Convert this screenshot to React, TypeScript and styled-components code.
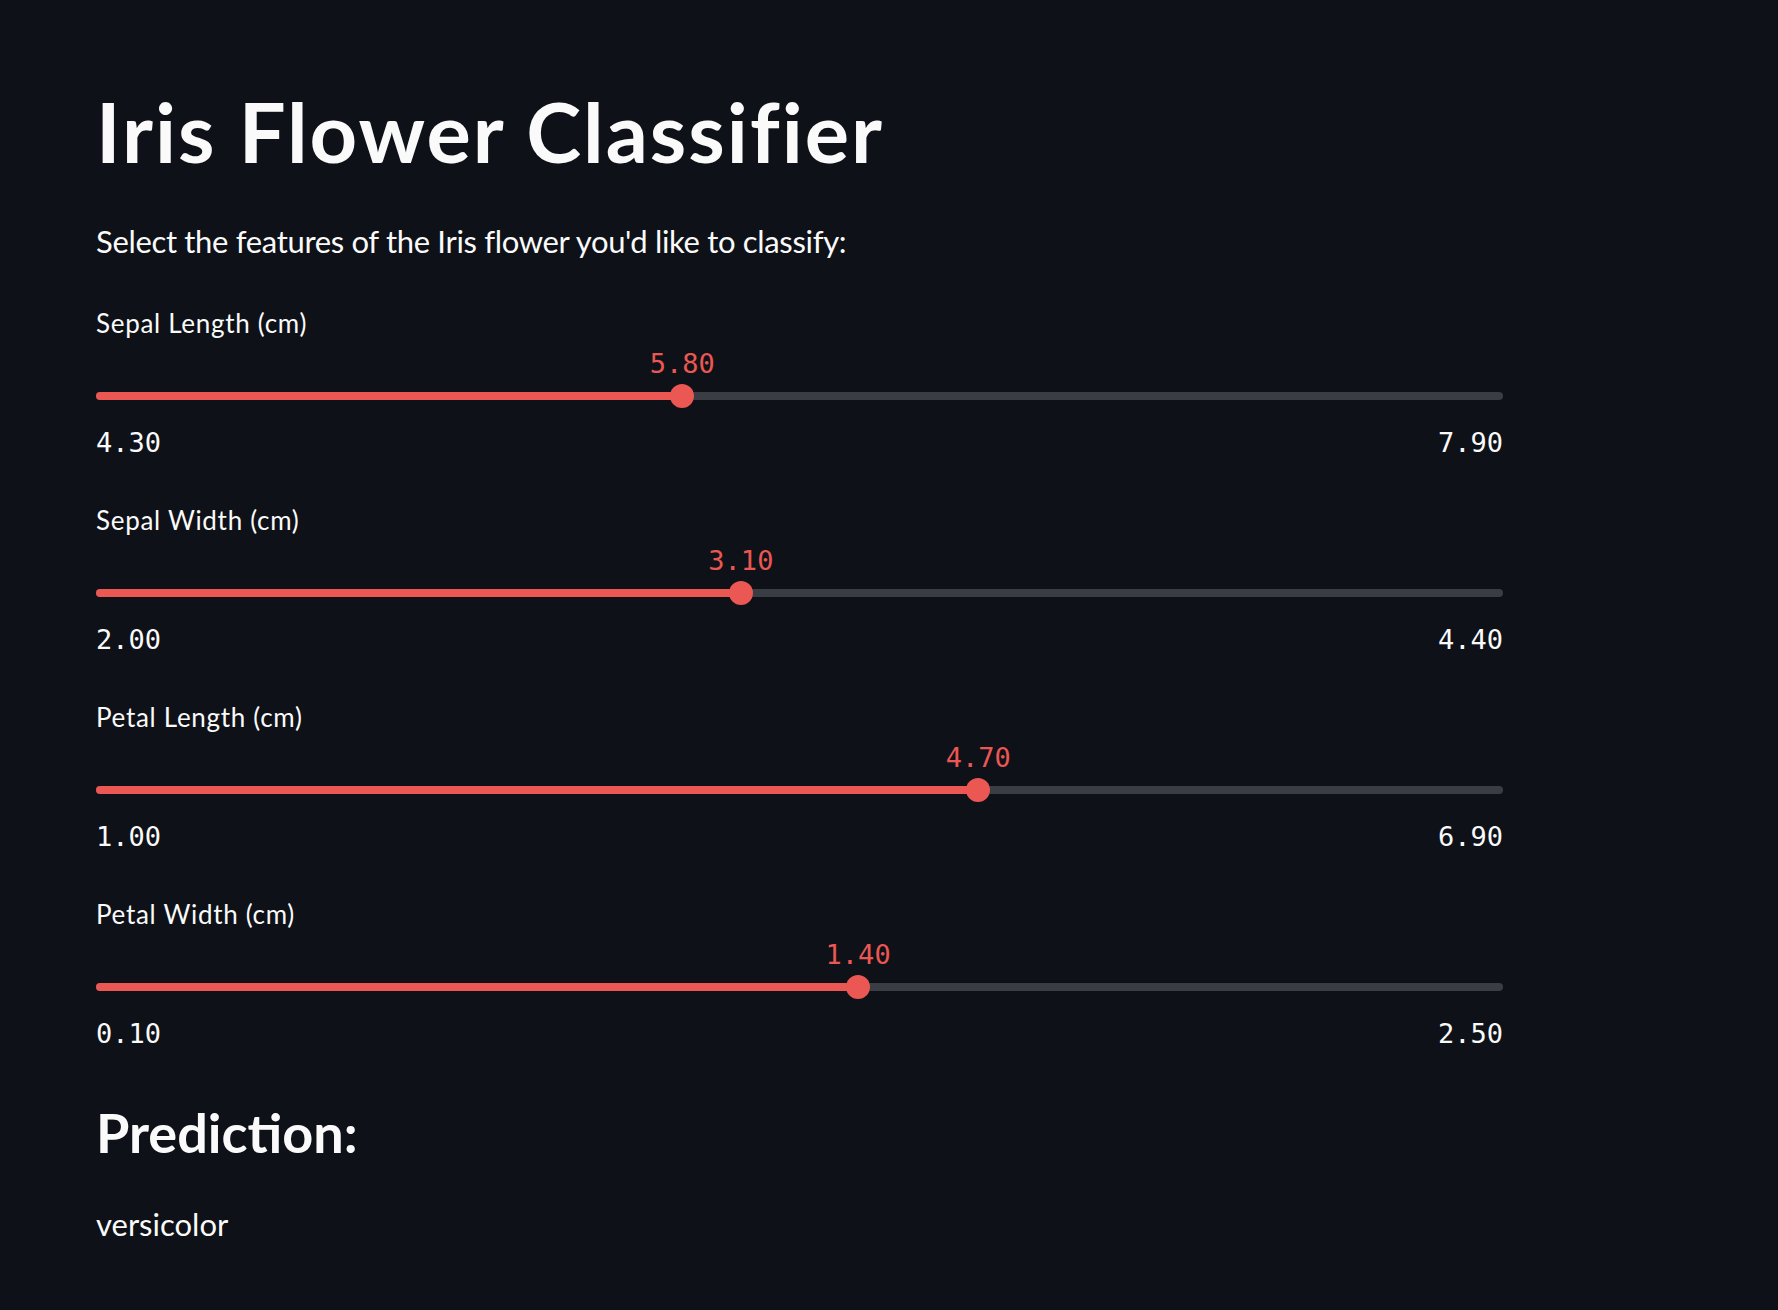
import React from "react";
import styled, { createGlobalStyle } from "styled-components";

const GlobalStyle = createGlobalStyle`
  html, body {
    margin: 0;
    padding: 0;
    background: #0e1117;
  }
  body {
    font-family: "Source Sans Pro", Lato, "Noto Sans", sans-serif;
    color: #fafafa;
    -webkit-font-smoothing: antialiased;
  }
`;

const RED = "#eb5753";
const RAIL = "#3b3d45";

const Page = styled.main`
  min-height: 1310px;
  box-sizing: border-box;
  padding: 83px 0 0 96px;
  background: #0e1117;
`;

const Column = styled.div`
  width: 1407px;
  display: flex;
  flex-direction: column;
`;

const Title = styled.h1`
  margin: 0;
  font-size: 83px;
  line-height: 96px;
  font-weight: 700;
  letter-spacing: 2px;
  color: #fafafa;
`;

const Intro = styled.p`
  margin: 42px 0 0;
  font-size: 31px;
  line-height: 40px;
  letter-spacing: -0.33px;
`;

const SliderList = styled.div`
  margin-top: 46px;
  display: flex;
  flex-direction: column;
  gap: 45px;
`;

const SliderBlock = styled.div`
  display: flex;
  flex-direction: column;
`;

const Label = styled.label`
  font-size: 26px;
  line-height: 32px;
  letter-spacing: 0.7px;
  color: #fafafa;
`;

const ValueRow = styled.div`
  position: relative;
  margin-top: 9px;
  height: 32px;
`;

const Mono = styled.span`
  font-family: "DejaVu Sans Mono", "Liberation Mono", monospace;
  font-size: 27px;
  line-height: 32px;
`;

const ValueText = styled(Mono)`
  position: absolute;
  top: 0;
  transform: translateX(-50%);
  color: ${RED};
  white-space: nowrap;
`;

const TrackRow = styled.div`
  margin-top: 4px;
  height: 24px;
  display: flex;
  align-items: center;
`;

const Rail = styled.div`
  position: relative;
  width: 100%;
  height: 8px;
  border-radius: 4px;
  background: ${RAIL};
`;

const Fill = styled.div`
  height: 100%;
  border-radius: 4px 0 0 4px;
  background: ${RED};
`;

const Thumb = styled.div`
  position: absolute;
  top: 50%;
  width: 24px;
  height: 24px;
  border-radius: 50%;
  background: ${RED};
  transform: translate(-50%, -50%);
`;

const RangeRow = styled.div`
  margin-top: 19px;
  display: flex;
  justify-content: space-between;
`;

const RangeText = styled(Mono)`
  color: #fafafa;
`;

const Heading = styled.h3`
  margin: 51px 0 0;
  font-size: 54px;
  line-height: 64px;
  font-weight: 700;
`;

const Result = styled.p`
  margin: 39px 0 0;
  font-size: 31px;
  line-height: 40px;
`;

type SliderProps = { label: string; min: number; max: number; value: number };

const Slider: React.FC<SliderProps> = ({ label, min, max, value }) => {
  const pct = ((value - min) / (max - min)) * 100;
  return (
    <SliderBlock>
      <Label>{label}</Label>
      <ValueRow>
        <ValueText style={{ left: `${pct}%` }}>{value.toFixed(2)}</ValueText>
      </ValueRow>
      <TrackRow>
        <Rail>
          <Fill style={{ width: `${pct}%` }} />
          <Thumb style={{ left: `${pct}%` }} />
        </Rail>
      </TrackRow>
      <RangeRow>
        <RangeText>{min.toFixed(2)}</RangeText>
        <RangeText>{max.toFixed(2)}</RangeText>
      </RangeRow>
    </SliderBlock>
  );
};

const sliders: SliderProps[] = [
  { label: "Sepal Length (cm)", min: 4.3, max: 7.9, value: 5.8 },
  { label: "Sepal Width (cm)", min: 2.0, max: 4.4, value: 3.1 },
  { label: "Petal Length (cm)", min: 1.0, max: 6.9, value: 4.7 },
  { label: "Petal Width (cm)", min: 0.1, max: 2.5, value: 1.4 },
];

export default function App() {
  return (
    <>
      <GlobalStyle />
      <Page>
        <Column>
          <Title>Iris Flower Classifier</Title>
          <Intro>Select the features of the Iris flower you'd like to classify:</Intro>
          <SliderList>
            {sliders.map((s) => (
              <Slider key={s.label} {...s} />
            ))}
          </SliderList>
          <Heading>Prediction:</Heading>
          <Result>versicolor</Result>
        </Column>
      </Page>
    </>
  );
}
